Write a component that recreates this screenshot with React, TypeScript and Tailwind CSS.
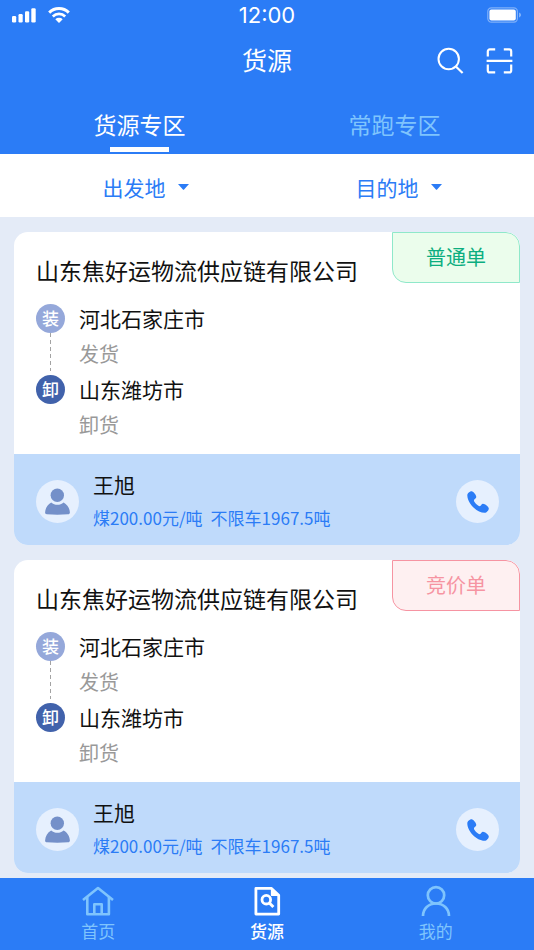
import { useState } from "react";
import clsx from "clsx";

type Order = {
  id: number;
  company: string;
  kind: "normal" | "bid";
  from: string;
  to: string;
  contact: string;
  price: string;
  amount: string;
};

const orders: Order[] = [
  {
    id: 1,
    company: "山东焦好运物流供应链有限公司",
    kind: "normal",
    from: "河北石家庄市",
    to: "山东潍坊市",
    contact: "王旭",
    price: "煤200.00元/吨",
    amount: "不限车1967.5吨",
  },
  {
    id: 2,
    company: "山东焦好运物流供应链有限公司",
    kind: "bid",
    from: "河北石家庄市",
    to: "山东潍坊市",
    contact: "王旭",
    price: "煤200.00元/吨",
    amount: "不限车1967.5吨",
  },
];

const tabs = ["货源专区", "常跑专区"];

function StatusBar() {
  return (
    <div className="grid h-[30px] grid-cols-3 items-center px-3">
      <div className="flex items-center gap-3">
        <svg width="24" height="15" viewBox="0 0 24 15" fill="white">
          <rect x="0" y="8" width="4.2" height="6.5" rx="1.2" />
          <rect x="6.5" y="6" width="4.2" height="8.5" rx="1.2" />
          <rect x="13" y="3.2" width="4.2" height="11.3" rx="1.2" />
          <rect x="19.3" y="0.2" width="4.4" height="14.3" rx="1.2" />
        </svg>
        <svg width="22" height="16" viewBox="0 0 22 16" fill="none">
          <path d="M1.2 5.6a14 14 0 0 1 19.6 0" stroke="white" strokeWidth="3" />
          <path d="M4.8 9.4a9 9 0 0 1 12.4 0" stroke="white" strokeWidth="2.8" />
          <path d="M7.3 12.3a5.4 5.4 0 0 1 7.4 0L11 16z" fill="white" />
        </svg>
      </div>
      <span className="text-center font-['Inter',sans-serif] text-[22px] leading-7">
        12:00
      </span>
      <svg
        className="justify-self-end"
        width="35"
        height="16"
        viewBox="0 0 35 16"
        fill="none"
      >
        <rect x="0.8" y="0.8" width="29.6" height="14.4" rx="3.6" stroke="white" strokeOpacity="0.4" strokeWidth="1.2" />
        <rect x="2.4" y="2.6" width="26.4" height="10.8" rx="2" fill="white" />
        <path d="M32.2 5.6c2.2.8 2.2 4 0 4.8z" fill="white" fillOpacity="0.5" />
      </svg>
    </div>
  );
}

function TitleBar() {
  return (
    <div className="grid h-[60px] grid-cols-3 items-center px-[21px]">
      <h1 className="col-start-2 pb-[2px] text-center text-[25px] leading-9">
        货源
      </h1>
      <div className="flex justify-end gap-[22px]">
        <button type="button" aria-label="搜索">
          <svg width="27" height="27" viewBox="0 0 27 27" fill="none" stroke="white" strokeWidth="2">
            <circle cx="11.7" cy="12" r="10.2" />
            <path d="M18.6 19.2 25.6 26" strokeWidth="2.2" />
          </svg>
        </button>
        <button type="button" aria-label="扫一扫">
          <svg width="27" height="27" viewBox="0 0 27 27" fill="none" stroke="white" strokeWidth="2.2">
            <path d="M1.8 9.4V4.4a2 2 0 0 1 2-2h5.4M17.8 2.4h5.4a2 2 0 0 1 2 2v5M25.2 17.6v5.8a2 2 0 0 1-2 2h-5.4M9.2 25.4H3.8a2 2 0 0 1-2-2v-5.8M.6 13.8h25.8" />
          </svg>
        </button>
      </div>
    </div>
  );
}

function FilterButton({ label }: { label: string }) {
  return (
    <button
      type="button"
      className="flex items-center justify-center gap-3 pl-[10px] text-[21px] leading-8 text-[#2b7cf6]"
    >
      {label}
      <svg width="11" height="6" viewBox="0 0 11 6" fill="currentColor">
        <path d="M0 0h11L6.3 5.2a1 1 0 0 1-1.6 0z" />
      </svg>
    </button>
  );
}

function Stop({ mark, city, note, last }: { mark: string; city: string; note: string; last?: boolean }) {
  return (
    <li className="flex gap-[14px]">
      <div className="flex flex-col items-center pt-1">
        <span
          className={clsx(
            "flex size-[29px] items-center justify-center rounded-full pb-[2px] text-[17px] leading-6 font-medium text-white",
            last ? "bg-[#4162ab]" : "bg-[#95a8da]"
          )}
        >
          {mark}
        </span>
        {!last && (
          <span className="w-px flex-1 bg-[repeating-linear-gradient(to_bottom,#a3a3a3_0_4px,transparent_4px_7px)]" />
        )}
      </div>
      <div>
        <p className="text-[21px] leading-9 text-[#111111]">{city}</p>
        <p className="text-[20px] leading-[35px] text-[#999999]">{note}</p>
      </div>
    </li>
  );
}

function OrderCard({ order }: { order: Order }) {
  return (
    <article className="overflow-hidden rounded-[14px] bg-white">
      <div className="flex items-start justify-between pl-[22px]">
        <h2 className="pt-[22px] text-[23px] leading-8 whitespace-nowrap text-[#111111]">
          {order.company}
        </h2>
        <span
          className={clsx(
            "flex h-[51px] w-32 shrink-0 items-center justify-center rounded-tr-[14px] rounded-bl-[14px] border pb-[2px] text-[20px] leading-7",
            order.kind === "normal"
              ? "border-[#8fe8ca] bg-[#ebfdec] text-[#0cae80]"
              : "border-[#f694a2] bg-[#fef0f1] text-[#f694a2]"
          )}
        >
          {order.kind === "normal" ? "普通单" : "竞价单"}
        </span>
      </div>

      <ol className="px-[22px] pt-[14px] pb-3">
        <Stop mark="装" city={order.from} note="发货" />
        <Stop mark="卸" city={order.to} note="卸货" last />
      </ol>

      <div className="flex h-[91px] items-center bg-[#bfdafb] pt-1 pr-[21px] pl-[22px]">
        <span className="flex size-[43px] items-center justify-center rounded-full bg-[#e6f0fe]">
          <svg width="25" height="27" viewBox="0 0 25 27" fill="#7490c9">
            <circle cx="12.3" cy="7.2" r="6.7" />
            <path d="M6.2 14.4c3.6 3.2 8.8 3.2 12.4 0 3.8 2 6.1 6 6.3 10 0 1.2-.8 1.8-1.9 1.9-7 .6-14.2.6-21.2 0C.7 26.2 0 25.6.1 24.4c.2-4 2.3-8 6.1-10z" />
          </svg>
        </span>
        <div className="ml-[14px] flex-1">
          <p className="text-[21px] leading-8 text-[#111111]">{order.contact}</p>
          <p className="flex gap-2 text-[17px] leading-9 text-[#2b7cf6]">
            <span>{order.price}</span>
            <span>{order.amount}</span>
          </p>
        </div>
        <button
          type="button"
          aria-label="拨打电话"
          className="flex size-[43px] items-center justify-center rounded-full bg-[#e6f0fe]"
        >
          <svg width="22" height="22" viewBox="0 0 22 22" fill="#2b7cf6">
            <path d="M.3 4.2C.3 2.2 3 .2 4.700.2 6.300.2 9.300 4 9.300 6c0 1.600-2.300 2-2.400 3.500 0 1.500 4.200 5.700 5.800 5.700 1.400-.1 1.700-2.400 3.300-2.400 2 .1 5.800 3 5.800 4.700 0 1.800-2.200 4.300-4.200 4.300C9.500 21.600.2 12.200.3 4.200z" />
          </svg>
        </button>
      </div>
    </article>
  );
}

function BottomNav() {
  return (
    <nav className="sticky bottom-0 mt-auto grid h-[72px] grid-cols-3 bg-[#2b7cf6] px-[14px] text-[17px] leading-6 text-[#7fc4fd]">
      <a href="#home" className="flex flex-col items-center gap-[2px] pt-[7px]">
        <svg width="32" height="32" viewBox="0 0 32 32" fill="none" stroke="currentColor" strokeWidth="2.6" strokeLinejoin="round">
          <path d="M1 15 16 3l15 12" />
          <path d="M5.3 12v17.2h21.6V12" />
          <path d="M12.3 29V19.2h7.4V29" />
        </svg>
        首页
      </a>
      <a
        href="#goods"
        aria-current="page"
        className="flex flex-col items-center gap-[2px] pt-[7px] font-medium text-white"
      >
        <svg width="32" height="32" viewBox="0 0 32 32" fill="none" stroke="currentColor" strokeWidth="2.8" strokeLinejoin="round">
          <path d="M4.9 3.4h15.6l7.2 6.8v18.9H4.9z" />
          <path d="M20.6 3.4v6.8h7.1z" fill="currentColor" strokeWidth="1.5" />
          <circle cx="15.3" cy="14.7" r="4.3" />
          <path d="m18.4 18 4 4" strokeWidth="3" />
        </svg>
        货源
      </a>
      <a href="#me" className="flex flex-col items-center gap-[2px] pt-[7px]">
        <svg width="32" height="32" viewBox="0 0 32 32" fill="none" stroke="currentColor" strokeWidth="2.7">
          <circle cx="16" cy="10.3" r="8.2" />
          <path d="M3 31c0-7.4 5.6-12.5 13-12.5S29 23.6 29 31" />
        </svg>
        我的
      </a>
    </nav>
  );
}

export default function App() {
  const [activeTab, setActiveTab] = useState(0);

  return (
    <div className="flex min-h-screen flex-col bg-[#e4ebf7] font-['Noto_Sans_CJK_SC',sans-serif]">
      <header className="bg-[#2b7cf6] text-white">
        <StatusBar />
        <TitleBar />
        <div role="tablist" className="grid grid-cols-2 px-3">
          {tabs.map((tab, i) => (
            <button
              key={tab}
              type="button"
              role="tab"
              aria-selected={activeTab === i}
              onClick={() => setActiveTab(i)}
              className={clsx(
                "flex h-16 flex-col items-center justify-end gap-[6px] pb-[2px] text-[23px] leading-[34px]",
                activeTab === i ? "text-white" : "text-[#7fc4fd]"
              )}
            >
              {tab}
              <span
                className={clsx(
                  "h-[5px] w-[59px]",
                  activeTab === i && "bg-white"
                )}
              />
            </button>
          ))}
        </div>
      </header>

      {/* Filters */}
      <div className="grid h-[63px] grid-cols-2 bg-white px-[14px] pt-[2px]">
        <FilterButton label="出发地" />
        <FilterButton label="目的地" />
      </div>

      <main className="flex flex-col gap-[15px] px-[14px] pt-[15px] pb-[5px]">
        {orders.map((order) => (
          <OrderCard key={order.id} order={order} />
        ))}
      </main>

      <BottomNav />
    </div>
  );
}
